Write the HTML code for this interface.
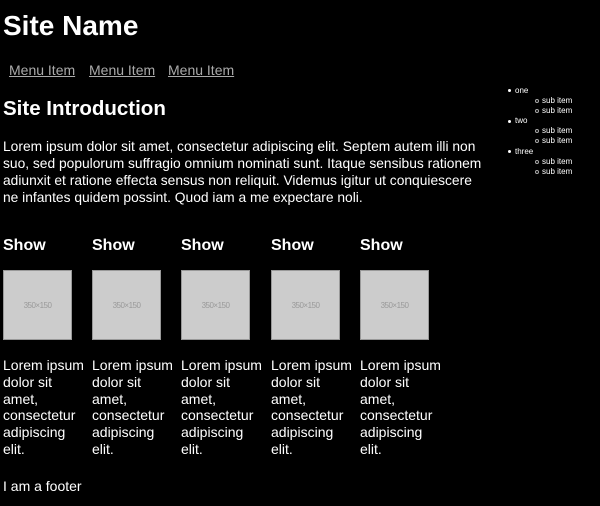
<!DOCTYPE html>
<html><head><meta charset="utf-8"><style>
*{margin:0;padding:0;box-sizing:border-box}
html,body{width:600px;height:506px;background:#000;color:#fff;font-family:"Liberation Sans",Arial,sans-serif;overflow:hidden;position:relative}
.a{position:absolute;white-space:nowrap}
h1{font-size:28px;font-weight:bold}
.menu{font-size:14px;color:#aaa;text-decoration:underline}
h2{font-size:20.5px;font-weight:bold}
.p{font-size:13.8px;line-height:17px}
.show{font-size:16px;font-weight:bold}
.img{position:absolute;top:270px;width:69px;height:70px;background:#ccc;border:1px solid #999;color:#999;font-size:8px;display:flex;align-items:center;justify-content:center;letter-spacing:-0.5px}
.col{font-size:14px;line-height:16.8px}
.side{font-size:8px;line-height:10.1px}
.dot{display:inline-block;width:3px;height:3px;border-radius:50%;background:#fff;margin-right:4px;vertical-align:middle}
.cir{display:inline-block;width:4px;height:4px;border-radius:50%;border:0.6px solid #aaa;margin-right:3px;vertical-align:middle}
</style></head><body>
<h1 class="a" style="left:3px;top:10px">Site Name</h1>
<div class="a menu" style="left:9px;top:62px">Menu Item</div>
<div class="a menu" style="left:89px;top:62px">Menu Item</div>
<div class="a menu" style="left:168px;top:62px">Menu Item</div>
<h2 class="a" style="left:3px;top:97px">Site Introduction</h2>
<div class="a p" style="left:3px;top:138px">Lorem ipsum dolor sit amet, consectetur adipiscing elit. Septem autem illi non<br>suo, sed populorum suffragio omnium nominati sunt. Itaque sensibus rationem<br>adiunxit et ratione effecta sensus non reliquit. Videmus igitur ut conquiescere<br>ne infantes quidem possint. Quod iam a me expectare noli.</div>

<div class="a show" style="left:3px;top:237px">Show</div>
<div class="a show" style="left:92px;top:237px">Show</div>
<div class="a show" style="left:181px;top:237px">Show</div>
<div class="a show" style="left:271px;top:237px">Show</div>
<div class="a show" style="left:360px;top:237px">Show</div>

<div class="img" style="left:3px">350×150</div>
<div class="img" style="left:92px">350×150</div>
<div class="img" style="left:181px">350×150</div>
<div class="img" style="left:271px">350×150</div>
<div class="img" style="left:360px">350×150</div>

<div class="a col" style="left:3px;top:357px">Lorem ipsum<br>dolor sit<br>amet,<br>consectetur<br>adipiscing<br>elit.</div>
<div class="a col" style="left:92px;top:357px">Lorem ipsum<br>dolor sit<br>amet,<br>consectetur<br>adipiscing<br>elit.</div>
<div class="a col" style="left:181px;top:357px">Lorem ipsum<br>dolor sit<br>amet,<br>consectetur<br>adipiscing<br>elit.</div>
<div class="a col" style="left:271px;top:357px">Lorem ipsum<br>dolor sit<br>amet,<br>consectetur<br>adipiscing<br>elit.</div>
<div class="a col" style="left:360px;top:357px">Lorem ipsum<br>dolor sit<br>amet,<br>consectetur<br>adipiscing<br>elit.</div>

<div class="a col" style="left:3px;top:478px">I am a footer</div>

<div class="a side" style="left:508px;top:86px">
<div><span class="dot"></span>one</div>
<div style="padding-left:27px"><span class="cir"></span>sub item</div>
<div style="padding-left:27px"><span class="cir"></span>sub item</div>
<div><span class="dot"></span>two</div>
<div style="padding-left:27px"><span class="cir"></span>sub item</div>
<div style="padding-left:27px"><span class="cir"></span>sub item</div>
<div><span class="dot"></span>three</div>
<div style="padding-left:27px"><span class="cir"></span>sub item</div>
<div style="padding-left:27px"><span class="cir"></span>sub item</div>
</div>
</body></html>
